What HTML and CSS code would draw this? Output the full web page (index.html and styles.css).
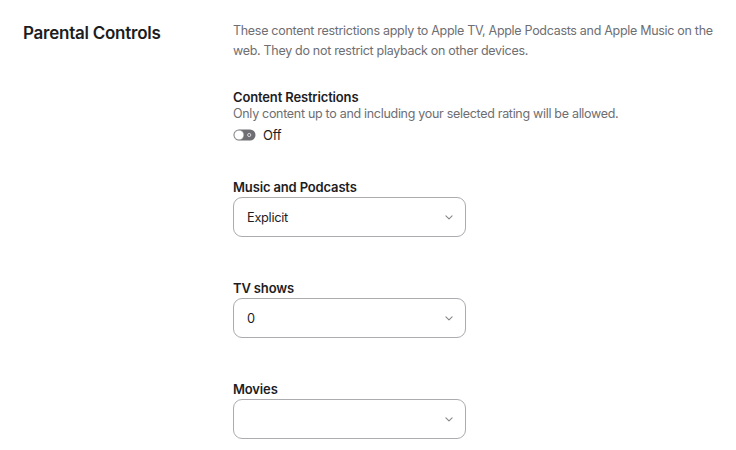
FILE: index.html
```html
<!DOCTYPE html>
<html lang="en">
<head>
<meta charset="utf-8">
<title>Parental Controls</title>
<link rel="stylesheet" href="styles.css">
</head>
<body>
<main class="page">
  <h2 class="title">Parental Controls</h2>
  <div class="content">
    <p class="intro">These content restrictions apply to Apple TV, Apple Podcasts and Apple Music on the web. They do not restrict playback on other devices.</p>

    <section class="restrictions">
      <h3 class="label">Content Restrictions</h3>
      <p class="hint">Only content up to and including your selected rating will be allowed.</p>
      <div class="toggle-row">
        <span class="toggle">
          <svg width="23" height="12" viewBox="0 0 23 12" aria-hidden="true">
            <rect x="0.5" y="0.5" width="22" height="11" rx="5.5" fill="#6e6e73"/>
            <circle cx="6" cy="6" r="4.8" fill="#fff" stroke="#8e8e93" stroke-width="0.5"/>
            <circle cx="16.2" cy="6" r="1.6" fill="none" stroke="#d8d8dc" stroke-width="1"/>
          </svg>
        </span>
        <span class="toggle-text">Off</span>
      </div>
    </section>

    <div class="field">
      <h3 class="label">Music and Podcasts</h3>
      <div class="select"><span class="value">Explicit</span><svg class="chev" width="8" height="5" viewBox="0 0 8 5"><path d="M0.9 0.9 L4 3.8 L7.1 0.9" fill="none" stroke="#86868b" stroke-width="1.1" stroke-linecap="round" stroke-linejoin="round"/></svg></div>
    </div>

    <div class="field">
      <h3 class="label">TV shows</h3>
      <div class="select"><span class="value">0</span><svg class="chev" width="8" height="5" viewBox="0 0 8 5"><path d="M0.9 0.9 L4 3.8 L7.1 0.9" fill="none" stroke="#86868b" stroke-width="1.1" stroke-linecap="round" stroke-linejoin="round"/></svg></div>
    </div>

    <div class="field">
      <h3 class="label">Movies</h3>
      <div class="select"><span class="value"></span><svg class="chev" width="8" height="5" viewBox="0 0 8 5"><path d="M0.9 0.9 L4 3.8 L7.1 0.9" fill="none" stroke="#86868b" stroke-width="1.1" stroke-linecap="round" stroke-linejoin="round"/></svg></div>
    </div>
  </div>
</main>
</body>
</html>
```

FILE: styles.css
```css
* { box-sizing: border-box; }

html, body {
  margin: 0;
  padding: 0;
  background: #ffffff;
}

body {
  font-family: Inter, "Noto Sans", "Liberation Sans", sans-serif;
  color: #1d1d1f;
  -webkit-font-smoothing: antialiased;
}

.page {
  display: grid;
  grid-template-columns: 233px 1fr;
  padding-top: 21px;
}

.title {
  margin: 0;
  padding-left: 23px;
  font-size: 17px;
  line-height: 24px;
  font-weight: 600;
  letter-spacing: -0.25px;
  color: #1d1d1f;
}

.content {
  display: flex;
  flex-direction: column;
  padding-right: 4px;
}

.intro {
  margin: 0;
  font-size: 12.5px;
  line-height: 20px;
  color: #6e6e73;
  letter-spacing: -0.3px;
}

.restrictions {
  margin-top: 28px;
  display: flex;
  flex-direction: column;
}

.label {
  margin: 0;
  font-size: 13px;
  line-height: 16px;
  font-weight: 600;
  color: #1d1d1f;
  letter-spacing: -0.15px;
}

.hint {
  margin: 0;
  font-size: 12.5px;
  line-height: 18px;
  color: #6e6e73;
  letter-spacing: -0.3px;
}

.toggle-row {
  display: flex;
  align-items: center;
  gap: 7px;
  height: 20px;
  margin-top: 2px;
}

.toggle {
  display: flex;
}

.toggle-text {
  font-size: 13px;
  color: #1d1d1f;
  letter-spacing: -0.2px;
}

.field {
  margin-top: 34px;
  display: flex;
  flex-direction: column;
  gap: 2px;
}

.field + .field {
  margin-top: 43px;
}

.select {
  width: 233px;
  height: 40px;
  border: 1px solid #ababb0;
  border-radius: 9px;
  display: flex;
  align-items: center;
  justify-content: space-between;
  padding: 0 12px 0 13px;
}

.value {
  font-size: 12.8px;
  color: #1d1d1f;
  letter-spacing: -0.3px;
}

.chev {
  display: block;
}
```
